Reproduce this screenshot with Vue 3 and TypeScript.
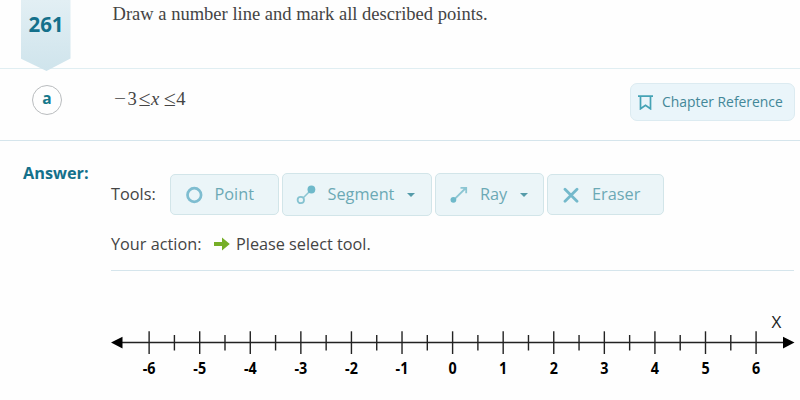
<script setup lang="ts">
interface Tick {
  x: number
  label: string | null
}

const ORIGIN = 341.6
const UNIT = 50.58

const ticks: Tick[] = Array.from({ length: 25 }, (_, i) => {
  const value = (i - 12) / 2
  return {
    x: ORIGIN + value * UNIT,
    label: Number.isInteger(value) ? String(value) : null,
  }
})
</script>

<template>
  <main class="page">
    <header class="question">
      <div class="ribbon"><span class="ribbon-number">261</span></div>
      <p class="prompt">Draw a number line and mark all described points.</p>
    </header>

    <section class="part">
      <span class="letter">a</span>
      <p class="math"><span class="minus">−</span><span class="digit">3</span><span class="le">≤</span><i>x</i><span class="le second">≤</span><span>4</span></p>
      <button class="chapter">
        <svg class="bookmark" width="16" height="16" viewBox="0 0 16 16" fill="none" stroke="#45a3b5" stroke-width="1.7">
          <path d="M0 2.2H15M2.5 2.2V14.8L7.5 11.2L12.5 14.8V2.2" />
        </svg>
        <span class="chapter-text">Chapter Reference</span>
      </button>
    </section>

    <section class="answer">
      <h2 class="answer-title">Answer:</h2>
      <div class="work">
        <div class="tools">
          <span class="tools-label">Tools:</span>
          <button class="tool point">
            <svg width="18" height="18" viewBox="0 0 18 18" fill="none">
              <circle cx="9.3" cy="9" r="6.8" stroke="#7ebdd0" stroke-width="2.7" />
            </svg>
            <span>Point</span>
          </button>
          <button class="tool segment">
            <svg width="20" height="20" viewBox="0 0 20 20" fill="none">
              <path d="M6.8 13.3L14.3 5.8" stroke="#8cc6d3" stroke-width="1.5" />
              <circle cx="4.8" cy="15" r="3.2" stroke="#86c3d1" stroke-width="1.8" />
              <circle cx="15.4" cy="4.5" r="3.9" fill="#6fb9ca" />
            </svg>
            <span>Segment</span>
            <i class="caret"></i>
          </button>
          <button class="tool ray">
            <svg width="18" height="18" viewBox="0 0 18 18" fill="none">
              <path d="M3.5 14.2L15.8 2M10.5 1.8H16.2V7.2" stroke="#8cc6d3" stroke-width="1.8" />
              <circle cx="3.4" cy="13.8" r="2.9" fill="#6fb9ca" />
            </svg>
            <span>Ray</span>
            <i class="caret"></i>
          </button>
          <button class="tool eraser">
            <svg width="17" height="16" viewBox="0 0 17 16" fill="none">
              <path d="M3 2.3L15 14.3M15 2.3L3 14.3" stroke="#74b9cb" stroke-width="2.8" stroke-linecap="round" />
            </svg>
            <span>Eraser</span>
          </button>
        </div>
        <div class="action">
          <span class="action-label">Your action:</span>
          <svg class="go" width="16" height="14" viewBox="0 0 16 14">
            <path d="M0 5.1H8V0.6L15.8 7L8 13.4V8.9H0Z" fill="#76ae27" />
          </svg>
          <span class="action-text">Please select tool.</span>
        </div>
        <svg class="number-line" width="689" height="100" viewBox="0 0 689 100">
          <path d="M8 42.6H674" stroke="#222" stroke-width="1.5" />
          <path d="M0 42.6L11.5 36.8V48.6Z M683.5 42.6L672 36.8V48.6Z" fill="#000" />
          <g v-for="tick in ticks" :key="tick.x" :transform="`translate(${tick.x} 0)`">
            <line
              :y1="tick.label === null ? 35 : 31.3"
              :y2="tick.label === null ? 50.5 : 54"
              stroke="#222"
              stroke-width="1.4"
            />
            <text v-if="tick.label !== null" class="tick-label" y="74" transform="scale(0.92 1)" text-anchor="middle">{{ tick.label }}</text>
          </g>
          <text class="axis-name" x="665.5" y="28" text-anchor="middle">X</text>
        </svg>
      </div>
    </section>
  </main>
</template>

<style>
body {
  margin: 0;
  background: #fefefe;
}
</style>

<style scoped>
.page {
  width: 800px;
  height: 400px;
  overflow: hidden;
  box-sizing: border-box;
  font-family: "Open Sans", "Noto Sans", sans-serif;
  color: #444;
}
p,
h2 {
  margin: 0;
}
.question {
  display: flex;
  height: 68px;
  border-bottom: 1px solid #e0eef2;
}
.ribbon {
  flex: none;
  width: 50px;
  height: 71px;
  margin-left: 20.5px;
  background: linear-gradient(#e2eff4, #cfe4ec);
  clip-path: polygon(0 0, 100% 0, 100% 58.5px, 52% 100%, 0 58.5px);
  text-align: center;
}
.ribbon-number {
  display: block;
  padding: 10px 0 0 1px;
  font-size: 20.5px;
  line-height: 28px;
  font-weight: 700;
  color: #14708b;
}
.prompt {
  margin-left: 42px;
  padding-top: 2px;
  font: 18.55px/23px "Liberation Serif", serif;
  white-space: nowrap;
}
.part {
  display: flex;
  height: 71px;
  border-bottom: 1px solid #d5e5ec;
}
.letter {
  flex: none;
  box-sizing: border-box;
  width: 30px;
  height: 30px;
  margin: 16px 0 0 32px;
  border: 1px solid #b9bcbe;
  border-radius: 50%;
  text-align: center;
  font-size: 15.5px;
  line-height: 25px;
  font-weight: 700;
  color: #14788b;
}
.math {
  display: flex;
  width: 516px;
  margin-left: 52px;
  padding-top: 18px;
  font: 18.6px/24px "Liberation Serif", serif;
}
.minus {
  width: 13.5px;
  transform: scaleX(1.15);
  transform-origin: left;
}
.digit {
  width: 11px;
}
.le {
  width: 12.5px;
  font-size: 22px;
  line-height: 23px;
}
.le.second {
  margin-left: 4.5px;
}
.chapter {
  display: flex;
  align-items: center;
  box-sizing: border-box;
  width: 165px;
  height: 38px;
  margin-top: 14px;
  padding: 0 0 0 7px;
  border: 1px solid #dcebf1;
  border-radius: 7px;
  background: #eaf5fa;
  color: #438798;
  font: 13.9px "Open Sans", sans-serif;
  white-space: nowrap;
}
.chapter-text {
  margin-left: 8px;
  padding-bottom: 2px;
}
.answer {
  display: flex;
}
.answer-title {
  width: 88px;
  padding: 21px 0 0 23px;
  font-size: 16.3px;
  line-height: 22px;
  color: #14708b;
}
.work {
  width: 683px;
}
.tools {
  display: flex;
  align-items: center;
  height: 43px;
  padding-top: 32px;
}
.tools-label {
  width: 58.5px;
  padding-bottom: 1px;
  font-size: 16.3px;
}
.tool {
  display: flex;
  align-items: center;
  box-sizing: border-box;
  height: 41px;
  padding: 0;
  border: 1px solid #d2e5e9;
  border-radius: 5px;
  background: #ebf5f8;
  color: #6ba9b5;
  font: 16.3px "Open Sans", sans-serif;
}
.tool > span {
  padding-bottom: 1px;
}
.tool + .tool {
  margin-left: 3px;
}
.point {
  width: 109px;
  padding-left: 14px;
  gap: 12px;
}
.segment {
  width: 150.5px;
  height: 43px;
  padding-left: 13px;
  gap: 12px;
}
.ray {
  width: 109px;
  height: 43px;
  padding-left: 14px;
  gap: 12px;
}
.eraser {
  width: 117px;
  padding-left: 14px;
  gap: 13px;
}
.caret {
  margin-left: 0.5px;
  border: 4px solid transparent;
  border-top: 4px solid #559ba9;
  border-bottom: 0;
}
.action {
  display: flex;
  align-items: center;
  box-sizing: border-box;
  height: 55px;
  padding-top: 1px;
  border-bottom: 1px solid #d5e5ec;
  font-size: 16.25px;
}
.action-label {
  width: 103px;
}
.action-text {
  margin-left: 6px;
}
.number-line {
  display: block;
  margin-top: 29px;
}
.tick-label {
  font: 700 15.6px "Open Sans", sans-serif;
  fill: #000;
}
.axis-name {
  font: 17px "Open Sans", sans-serif;
  fill: #222;
}
</style>
